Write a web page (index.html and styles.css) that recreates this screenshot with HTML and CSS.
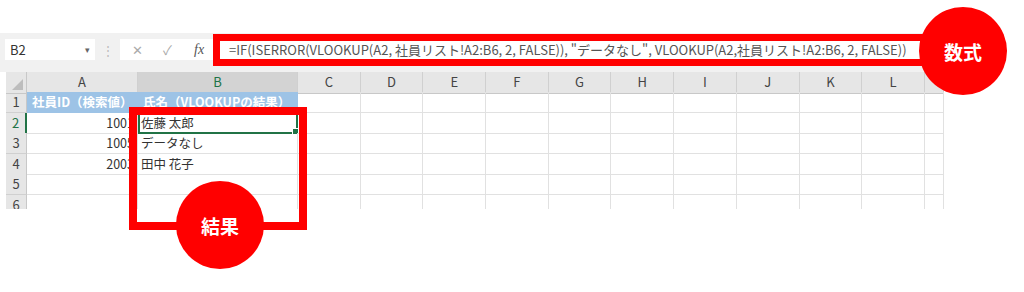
FILE: index.html
```html
<!DOCTYPE html>
<html lang="ja">

<head>
  <meta charset="UTF-8" />
  <title>VLOOKUP ISERROR</title>
  <link rel="stylesheet" href="styles.css">
</head>

<body>
  <div class="page">
    <div class="excel">
      <div class="fbar">
        <div class="namebox"><span>B2</span><span class="caret">▾</span></div>
        <div class="dots">⋮</div>
        <div class="tools"><span class="tool">✕</span><span class="tool">✓</span><span class="fx">fx</span></div>
        <div class="formula">=IF(ISERROR(VLOOKUP(A2, 社員リスト!A2:B6, 2, FALSE)), "データなし", VLOOKUP(A2,社員リスト!A2:B6, 2, FALSE))</div>
      </div>

      <div class="sheet">
        <div class="row hdr">
          <div class="corner"></div>
          <div class="ch">A</div>
          <div class="ch sel">B</div>
          <div class="ch">C</div>
          <div class="ch">D</div>
          <div class="ch">E</div>
          <div class="ch">F</div>
          <div class="ch">G</div>
          <div class="ch">H</div>
          <div class="ch">I</div>
          <div class="ch">J</div>
          <div class="ch">K</div>
          <div class="ch">L</div>
          <div class="ch"></div>
        </div>

        <div class="row">
          <div class="rh">1</div>
          <div class="c title">社員ID（検索値）</div>
          <div class="c title">氏名（VLOOKUPの結果）</div>
          <div class="c"></div><div class="c"></div><div class="c"></div><div class="c"></div><div class="c"></div>
          <div class="c"></div><div class="c"></div><div class="c"></div><div class="c"></div><div class="c"></div><div class="c"></div>
        </div>

        <div class="row">
          <div class="rh active">2</div>
          <div class="c num">1001</div>
          <div class="c picked">佐藤 太郎<span class="handle"></span></div>
          <div class="c"></div><div class="c"></div><div class="c"></div><div class="c"></div><div class="c"></div>
          <div class="c"></div><div class="c"></div><div class="c"></div><div class="c"></div><div class="c"></div><div class="c"></div>
        </div>

        <div class="row">
          <div class="rh">3</div>
          <div class="c num">1005</div>
          <div class="c">データなし</div>
          <div class="c"></div><div class="c"></div><div class="c"></div><div class="c"></div><div class="c"></div>
          <div class="c"></div><div class="c"></div><div class="c"></div><div class="c"></div><div class="c"></div><div class="c"></div>
        </div>

        <div class="row">
          <div class="rh">4</div>
          <div class="c num">2003</div>
          <div class="c">田中 花子</div>
          <div class="c"></div><div class="c"></div><div class="c"></div><div class="c"></div><div class="c"></div>
          <div class="c"></div><div class="c"></div><div class="c"></div><div class="c"></div><div class="c"></div><div class="c"></div>
        </div>

        <div class="row">
          <div class="rh">5</div>
          <div class="c"></div><div class="c"></div>
          <div class="c"></div><div class="c"></div><div class="c"></div><div class="c"></div><div class="c"></div>
          <div class="c"></div><div class="c"></div><div class="c"></div><div class="c"></div><div class="c"></div><div class="c"></div>
        </div>

        <div class="row">
          <div class="rh">6</div>
          <div class="c"></div><div class="c"></div>
          <div class="c"></div><div class="c"></div><div class="c"></div><div class="c"></div><div class="c"></div>
          <div class="c"></div><div class="c"></div><div class="c"></div><div class="c"></div><div class="c"></div><div class="c"></div>
        </div>
      </div>
    </div>

    <!-- annotations -->
    <div class="mark mark-formula"></div>
    <div class="mark mark-result"></div>
    <div class="badge badge-formula">数式</div>
    <div class="badge badge-result">結果</div>
  </div>
</body>

</html>
```

FILE: styles.css
```css
body {
  font-family: "Noto Sans CJK JP", "Noto Sans", sans-serif;
  background-color: white;
  color: #333;
  margin: 0;
  padding: 0;
}

.page {
  position: relative;
  width: 1024px;
  height: 292px;
  padding-top: 33px;
  box-sizing: border-box;
}

.excel {
  width: 944px;
}

/* formula bar */
.fbar {
  display: flex;
  align-items: center;
  height: 39px;
  padding: 0 0 6px 5px;
  box-sizing: border-box;
  background-color: #f1f1f1;
  font-size: 13px;
}

.namebox {
  display: flex;
  justify-content: space-between;
  align-items: center;
  width: 90px;
  height: 21px;
  padding: 0 5px;
  box-sizing: border-box;
  background: white;
  color: #333;
}

.caret {
  font-size: 9px;
  color: #666;
}

.dots {
  width: 25px;
  text-align: center;
  color: #bbb;
  font-size: 12px;
}

.tools {
  display: flex;
  align-items: center;
  width: 93px;
  height: 21px;
  padding-left: 12px;
  box-sizing: border-box;
  background: white;
}

.tool {
  width: 31px;
  color: #aaa;
  font-size: 13px;
}

.fx {
  font-family: "Liberation Serif", serif;
  font-style: italic;
  color: #555;
  font-size: 14px;
}

.formula {
  flex: 1;
  height: 21px;
  line-height: 21px;
  padding-left: 16px;
  background: white;
  color: #555;
  font-size: 13px;
  white-space: nowrap;
  overflow: hidden;
}

/* grid */
.sheet {
  margin-left: 6px;
  height: 137px;
  overflow: hidden;
  font-size: 13px;
}

.row {
  display: grid;
  grid-template-columns: 21px 111px 160px repeat(10, 62.7px) 1fr;
  height: 20.5px;
}

.row.hdr {
  height: 20px;
}

.ch,
.corner {
  background: #e6e6e6;
  border-right: 1px solid #d0d0d0;
  border-bottom: 1px solid #c8c8c8;
  text-align: center;
  line-height: 20px;
  color: #444;
}

.corner {
  position: relative;
  border-right: 1px solid #c8c8c8;
}

.corner::after {
  content: "";
  position: absolute;
  right: 3px;
  bottom: 3px;
  border-left: 11px solid transparent;
  border-bottom: 11px solid #bdbdbd;
}

.ch.sel {
  background: #d3d3d3;
  color: #217346;
  border-bottom: 2px solid #217346;
}

.rh {
  background: #e6e6e6;
  border-right: 1px solid #c8c8c8;
  border-bottom: 1px solid #d0d0d0;
  text-align: center;
  line-height: 20px;
  color: #444;
}

.rh.active {
  color: #217346;
  border-right: 2px solid #217346;
}

.c {
  border-right: 1px solid #e1e1e1;
  border-bottom: 1px solid #e1e1e1;
  padding: 0 3px;
  line-height: 20px;
  white-space: nowrap;
  font-size: 12.5px;
  position: relative;
}

.c.title {
  background: #9dc3e6;
  color: white;
  font-weight: bold;
  border-color: #9dc3e6;
  padding-left: 5px;
}

.c.num {
  text-align: right;
}

.c.picked {
  outline: 2px solid #217346;
  outline-offset: -2px;
}

.handle {
  position: absolute;
  right: -2px;
  bottom: -2px;
  width: 5px;
  height: 5px;
  background: #217346;
  border: 1px solid white;
}

/* annotations */
.mark {
  position: absolute;
  border: 7px solid #ff0000;
  box-sizing: border-box;
}

.mark-formula {
  left: 213px;
  top: 34px;
  width: 714px;
  height: 32px;
}

.mark-result {
  left: 129px;
  top: 107px;
  width: 178px;
  height: 123px;
  border-width: 8px;
}

.badge {
  position: absolute;
  width: 88px;
  height: 88px;
  border-radius: 50%;
  background: #ff0000;
  color: white;
  font-weight: bold;
  font-size: 19px;
  display: flex;
  justify-content: center;
  align-items: center;
}

.badge-formula {
  left: 919px;
  top: 7px;
}

.badge-result {
  left: 176px;
  top: 181px;
}
```
